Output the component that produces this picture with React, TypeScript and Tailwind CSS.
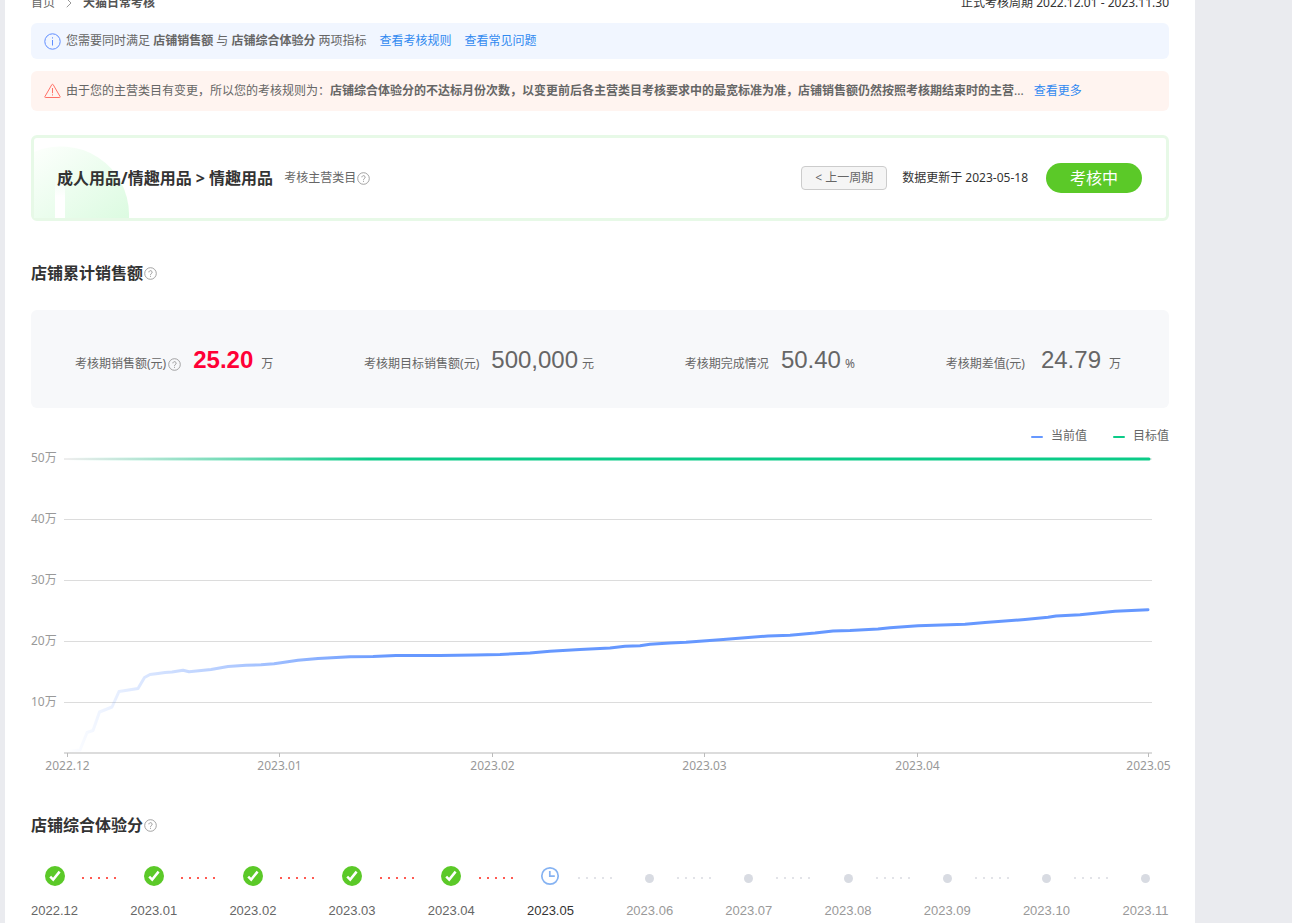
import { ChevronRight } from 'lucide-react';
import clsx from 'clsx';

type StepStatus = 'passed' | 'current' | 'pending';

const stats = [
  { label: '考核期销售额(元)', value: '25.20', unit: '万', valueGap: 'ml-3', unitGap: 'ml-2', help: true, danger: true },
  { label: '考核期目标销售额(元)', value: '500,000', unit: '元', valueGap: 'ml-3', unitGap: 'ml-1' },
  { label: '考核期完成情况', value: '50.40', unit: '%', valueGap: 'ml-3', unitGap: 'ml-1' },
  { label: '考核期差值(元)', value: '24.79', unit: '万', valueGap: 'ml-4', unitGap: 'ml-2' },
];

const yTicks = [
  { label: '50万', y: 13 },
  { label: '40万', y: 73.5 },
  { label: '30万', y: 134.5 },
  { label: '20万', y: 195.5 },
  { label: '10万', y: 256.5 },
];

const xTicks = [
  { label: '2022.12', x: 36.5 },
  { label: '2023.01', x: 248.5 },
  { label: '2023.02', x: 461.5 },
  { label: '2023.03', x: 673.5 },
  { label: '2023.04', x: 886.5 },
  { label: '2023.05', x: 1117.5 },
];

const salesLine =
  '36,305.5 49,304 56,286.5 62,284.5 68.5,266 81,261 88,245.5 107,242.5 113.5,231.5 119,228.5 127,227.5 134,226.5 141,226 152,224.2 158,225.8 180,223.5 197,220.5 215,219.2 230,218.8 243,217.8 250,216.8 267,214.3 287,212.6 319,210.8 342,210.5 365,209.5 409,209.5 444,209 469,208.5 499,207 519,205.3 549,203.5 579,202 594,200.3 609,199.8 619,198.3 639,197 655,196.3 689,193.8 714,191.7 737,190 759,189.2 784,187 802,185 819,184.5 847,183 859,181.8 887,179.8 934,178.3 954,176.5 994,173.5 1017,171.3 1025,170 1049,168.8 1084,165.3 1117,163.8';

const steps: { month: string; status: StepStatus }[] = [
  { month: '2022.12', status: 'passed' },
  { month: '2023.01', status: 'passed' },
  { month: '2023.02', status: 'passed' },
  { month: '2023.03', status: 'passed' },
  { month: '2023.04', status: 'passed' },
  { month: '2023.05', status: 'current' },
  { month: '2023.06', status: 'pending' },
  { month: '2023.07', status: 'pending' },
  { month: '2023.08', status: 'pending' },
  { month: '2023.09', status: 'pending' },
  { month: '2023.10', status: 'pending' },
  { month: '2023.11', status: 'pending' },
];

function HelpIcon() {
  return (
    <svg viewBox="0 0 13 13" className="w-[13px] h-[13px] shrink-0" fill="none" stroke="#999" aria-hidden="true">
      <circle cx="6.5" cy="6.5" r="5.8" strokeWidth="0.9" />
      <path d="M4.9 5.3a1.6 1.6 0 1 1 2.5 1.3c-.6.4-.9.7-.9 1.3" strokeWidth="1" />
      <path d="M6.5 8.8v1" strokeWidth="1" />
    </svg>
  );
}

function InfoIcon() {
  return (
    <svg viewBox="0 0 17 17" className="w-[17px] h-[17px] shrink-0" fill="none" stroke="#5f8dff" aria-hidden="true">
      <circle cx="8.5" cy="8.5" r="7.7" />
      <path d="M8.5 7v5.5M8.5 4.3v1.2" />
    </svg>
  );
}

function WarnIcon() {
  return (
    <svg viewBox="0 0 17 17" className="w-[17px] h-[17px] shrink-0" fill="none" stroke="#ff7066" aria-hidden="true">
      <path d="M7.8 1.7.9 13.6c-.3.5 0 .9.5.9h14.2c.5 0 .8-.4.5-.9L9.2 1.7c-.4-.6-1-.6-1.4 0Z" />
      <path d="M8.5 5v5.2M8.5 11.3v1.2" />
    </svg>
  );
}

function StepIcon({ status }: { status: StepStatus }) {
  if (status === 'passed') {
    return (
      <svg viewBox="0 0 20 20" className="w-5 h-5" aria-hidden="true">
        <circle cx="10" cy="10" r="10" fill="#5bc928" />
        <path d="m5.2 10.6 3 3 6.4-8" fill="none" stroke="#fff" strokeWidth="2.5" />
      </svg>
    );
  }
  if (status === 'current') {
    return (
      <svg viewBox="0 0 20 20" className="w-5 h-5" fill="none" stroke="#86b3f2" strokeWidth="1.7" aria-hidden="true">
        <circle cx="10" cy="10" r="8.2" />
        <path d="M9.8 5v5.2h5" />
      </svg>
    );
  }
  return <span className="w-[9px] h-[9px] mt-1 rounded-full bg-[#d8dbe2]" />;
}

function SectionTitle({ children }: { children: string }) {
  return (
    <div className="flex items-center h-6 gap-[1px]">
      <h2 className="text-base leading-6 font-bold text-[#333]">{children}</h2>
      <HelpIcon />
    </div>
  );
}

function SalesChart() {
  return (
    <svg viewBox="0 0 1138 332" className="block w-full overflow-visible" role="img" aria-label="店铺累计销售额">
      <defs>
        <linearGradient id="currentLine" gradientUnits="userSpaceOnUse" x1="36" y1="0" x2="1118" y2="0">
          <stop offset="0" stopColor="#6698ff" stopOpacity="0" />
          <stop offset="0.3" stopColor="#6698ff" />
        </linearGradient>
        <linearGradient id="targetLine" gradientUnits="userSpaceOnUse" x1="36" y1="0" x2="1118" y2="0">
          <stop offset="0" stopColor="#0bcb88" stopOpacity="0" />
          <stop offset="0.28" stopColor="#0bcb88" />
        </linearGradient>
      </defs>
      <g fontSize="12" fill="#999">
        {yTicks.map(tick => (
          <g key={tick.label}>
            <line x1="33" x2="1121" y1={tick.y} y2={tick.y} stroke="#dcdcdc" />
            <text x="0" y={tick.y + 3}>{tick.label}</text>
          </g>
        ))}
        <line x1="33" x2="1121" y1="307" y2="307" stroke="#dcdcdc" strokeWidth="2" />
        {xTicks.map(tick => (
          <g key={tick.label}>
            <line x1={tick.x} x2={tick.x} y1="307" y2="311" stroke="#bbb" />
            <text x={tick.x} y="324" textAnchor="middle">{tick.label}</text>
          </g>
        ))}
      </g>
      <line x1="36" x2="1118" y1="13" y2="13" stroke="url(#targetLine)" strokeWidth="3" strokeLinecap="round" />
      <polyline
        points={salesLine}
        fill="none"
        stroke="url(#currentLine)"
        strokeWidth="3"
        strokeLinecap="round"
        strokeLinejoin="round"
      />
    </svg>
  );
}

export default function App() {
  return (
    <div className="min-h-screen bg-[#eaebef] pl-[5px] pr-[97px] font-['Noto_Sans','Noto_Sans_CJK_SC',sans-serif] text-xs text-[#666]">
      <main className="flow-root min-h-screen bg-white px-[26px]">
        <header className="-mt-[7px] flex justify-between leading-5">
          <nav className="flex items-center">
            <a href="#" className="text-[#666]">首页</a>
            <ChevronRight className="w-4 h-4 mx-[6px] text-[#999]" strokeWidth={1.5} />
            <span className="font-bold text-[#555]">天猫日常考核</span>
          </nav>
          <p className="text-[#333]">正式考核周期 2022.12.01 - 2023.11.30</p>
        </header>

        <div className="mt-[10px] flex items-center h-9 px-[13px] rounded-md bg-[#f1f6ff]">
          <InfoIcon />
          <p className="ml-[5px]">
            您需要同时满足 <b>店铺销售额</b> 与 <b>店铺综合体验分</b> 两项指标
          </p>
          <a href="#" className="ml-[13px] text-[#3089f0]">查看考核规则</a>
          <a href="#" className="ml-[13px] text-[#3089f0]">查看常见问题</a>
        </div>

        <div className="mt-3 flex items-center h-10 px-[13px] rounded-md bg-[#fff4f0]">
          <WarnIcon />
          <p className="ml-[5px] truncate">
            由于您的主营类目有变更，所以您的考核规则为：
            <b>店铺综合体验分的不达标月份次数，以变更前后各主营类目考核要求中的最宽标准为准，店铺销售额仍然按照考核期结束时的主营</b>...
          </p>
          <a href="#" className="ml-[10px] shrink-0 text-[#3089f0]">查看更多</a>
        </div>

        <section className="relative mt-6 flex items-center justify-between h-[86px] pl-[23px] pr-6 rounded-md border-3 border-[#e7f9e7]">
          <svg viewBox="0 0 95 72" className="absolute left-0 bottom-0 w-[95px] h-[72px]" aria-hidden="true">
            <defs>
              <linearGradient id="badge" x1="0" y1="0" x2="1" y2="1">
                <stop offset="0.05" stopColor="#fbfffb" />
                <stop offset="1" stopColor="#dcfbe1" />
              </linearGradient>
              <linearGradient id="slit" x1="0" y1="0" x2="0" y2="1">
                <stop offset="0" stopColor="#fff" stopOpacity="0" />
                <stop offset="0.5" stopColor="#fff" />
              </linearGradient>
            </defs>
            <path d="M0 6A68 68 0 0 1 95 68v4H0Z" fill="url(#badge)" />
            <path d="M21 30h10v42H21Z" fill="url(#slit)" />
          </svg>
          <div className="relative flex items-center">
            <h1 className="text-base leading-6 font-bold text-[#333]">成人用品/情趣用品 &gt; 情趣用品</h1>
            <span className="ml-[11px] mr-[1px]">考核主营类目</span>
            <HelpIcon />
          </div>
          <div className="flex items-center">
            <button type="button" className="h-6 px-[13px] rounded-sm border border-[#ccc] bg-[#f5f5f5]">
              &lt; 上一周期
            </button>
            <p className="ml-[15px] text-[#333]">数据更新于 2023-05-18</p>
            <span className="ml-[18px] w-24 h-[30px] rounded-full bg-[#5bc928] text-center text-base leading-[30px] text-white">
              考核中
            </span>
          </div>
        </section>

        <section className="mt-10">
          <SectionTitle>店铺累计销售额</SectionTitle>
          <dl className="mt-[25px] flex items-center justify-between h-[98px] pt-[2px] pl-11 pr-12 rounded-md bg-[#f7f8fa]">
            {stats.map(stat => (
              <div key={stat.label} className="flex items-baseline">
                <dt className="flex items-center gap-[2px]">
                  {stat.label}
                  {stat.help && <HelpIcon />}
                </dt>
                <dd className={clsx('flex items-baseline', stat.valueGap)}>
                  <span
                    className={clsx(
                      "font-['Liberation_Sans',sans-serif] text-2xl",
                      stat.danger && 'font-bold text-[#ff0036]'
                    )}
                  >
                    {stat.value}
                  </span>
                  <span className={stat.unitGap}>{stat.unit}</span>
                </dd>
              </div>
            ))}
          </dl>

          <div className="mt-[18px] flex justify-end gap-[26px] leading-5">
            <span className="flex items-center gap-2">
              <i className="w-3 h-[2px] mt-[2px] rounded-full bg-[#6698ff]" />
              当前值
            </span>
            <span className="flex items-center gap-2">
              <i className="w-3 h-[2px] mt-[2px] rounded-full bg-[#0bcb88]" />
              目标值
            </span>
          </div>
          <SalesChart />
        </section>

        <section className="mt-[35px]">
          <SectionTitle>店铺综合体验分</SectionTitle>
          <ol className="mt-[29px] flex">
            {steps.map((step, index) => (
              <li key={step.month} className="flex flex-1 last:flex-none">
                <div className="w-[47px] shrink-0">
                  <div className="flex items-center justify-center h-5">
                    <StepIcon status={step.status} />
                  </div>
                  <p
                    className={clsx(
                      "mt-[15px] text-center font-['Liberation_Sans',sans-serif] text-[13px] leading-5",
                      step.status === 'passed' && 'text-[#666]',
                      step.status === 'current' && 'text-[#333]',
                      step.status === 'pending' && 'text-[#999]'
                    )}
                  >
                    {step.month}
                  </p>
                </div>
                {index < steps.length - 1 && (
                  <div className="flex gap-[6px] pt-[11px] pl-1">
                    {[0, 1, 2, 3, 4].map(dot => (
                      <i
                        key={dot}
                        className={clsx('w-[2px] h-[2px]', step.status === 'passed' ? 'bg-[#ff5a52]' : 'bg-[#e2e3e8]')}
                      />
                    ))}
                  </div>
                )}
              </li>
            ))}
          </ol>
        </section>
      </main>
    </div>
  );
}
